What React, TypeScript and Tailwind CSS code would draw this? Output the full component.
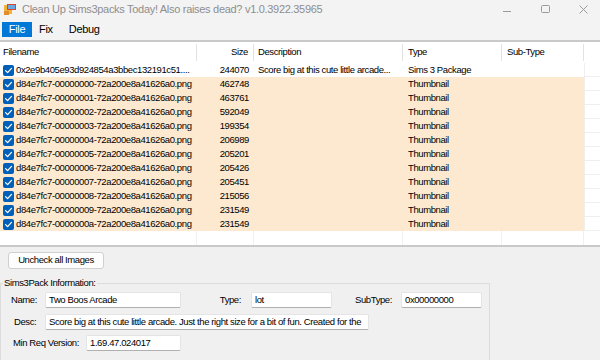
import React from 'react'

const files = [
  { name: '0x2e9b405e93d924854a3bbec132191c51....', size: '244070', desc: 'Score big at this cute little arcade...', type: 'Sims 3 Package', thumb: false },
  { name: 'd84e7fc7-00000000-72a200e8a41626a0.png', size: '462748', desc: '', type: 'Thumbnail', thumb: true },
  { name: 'd84e7fc7-00000001-72a200e8a41626a0.png', size: '463761', desc: '', type: 'Thumbnail', thumb: true },
  { name: 'd84e7fc7-00000002-72a200e8a41626a0.png', size: '592049', desc: '', type: 'Thumbnail', thumb: true },
  { name: 'd84e7fc7-00000003-72a200e8a41626a0.png', size: '199354', desc: '', type: 'Thumbnail', thumb: true },
  { name: 'd84e7fc7-00000004-72a200e8a41626a0.png', size: '206989', desc: '', type: 'Thumbnail', thumb: true },
  { name: 'd84e7fc7-00000005-72a200e8a41626a0.png', size: '205201', desc: '', type: 'Thumbnail', thumb: true },
  { name: 'd84e7fc7-00000006-72a200e8a41626a0.png', size: '205426', desc: '', type: 'Thumbnail', thumb: true },
  { name: 'd84e7fc7-00000007-72a200e8a41626a0.png', size: '205451', desc: '', type: 'Thumbnail', thumb: true },
  { name: 'd84e7fc7-00000008-72a200e8a41626a0.png', size: '215056', desc: '', type: 'Thumbnail', thumb: true },
  { name: 'd84e7fc7-00000009-72a200e8a41626a0.png', size: '231549', desc: '', type: 'Thumbnail', thumb: true },
  { name: 'd84e7fc7-0000000a-72a200e8a41626a0.png', size: '231549', desc: '', type: 'Thumbnail', thumb: true },
]

const cols = 'grid grid-cols-[197px_57px_149px_99px_82px_16px]'

function Check() {
  return (
    <svg width="11" height="11" viewBox="0 0 11 11" className="shrink-0">
      <rect x="0" y="0" width="11" height="11" rx="2" fill="#005fb8" />
      <path d="M2.6 5.6 L4.6 7.6 L8.5 3.4" fill="none" stroke="#fff" strokeWidth="1.3" strokeLinecap="round" strokeLinejoin="round" />
    </svg>
  )
}

function AppIcon() {
  return (
    <svg width="12" height="11" viewBox="0 0 12 11">
      <rect x="0" y="1" width="8" height="9" fill="#f2b33d" />
      <rect x="3" y="0" width="9" height="6" fill="#d9442e" />
      <rect x="4" y="1" width="7" height="4" fill="#6fa6e0" />
      <rect x="0" y="7" width="5" height="4" fill="#e58c2a" />
    </svg>
  )
}

function Field({ w, children }: { w: string; children?: React.ReactNode }) {
  return (
    <div className={`${w} h-[16px] bg-white border border-[#e4e4e4] border-b-[#b0b0b0] rounded-[2px] pl-[3px] flex items-center overflow-hidden whitespace-nowrap`}>
      {children}
    </div>
  )
}

export default function App() {
  return (
    <div className="w-[600px] h-[360px] overflow-hidden bg-[#f0f0f0] font-['Liberation_Sans',Arial,sans-serif] text-[9.5px] tracking-[-0.4px] text-black">
      {/* title bar */}
      <div className="h-[19px] flex items-center bg-[#f3f3f3]">
        <div className="ml-[4px]"><AppIcon /></div>
        <span className="ml-[6px] text-[11px] text-[#8e8e8e] tracking-[-0.3px]">
          Clean Up Sims3packs Today! Also raises dead? v1.0.3922.35965
        </span>
        <div className="ml-auto flex items-center text-[#9a9a9a]">
          <svg width="9" height="9" viewBox="0 0 9 9" className="mr-[29px]"><path d="M0 6.5 H8" stroke="currentColor" strokeWidth="1" /></svg>
          <svg width="9" height="9" viewBox="0 0 9 9" className="mr-[29px]"><rect x="0.5" y="0.5" width="8" height="7" rx="1" fill="none" stroke="currentColor" strokeWidth="1" /></svg>
          <svg width="9" height="9" viewBox="0 0 9 9" className="mr-[12px]"><path d="M0.5 0.5 L8.5 8.5 M8.5 0.5 L0.5 8.5" stroke="currentColor" strokeWidth="1" /></svg>
        </div>
      </div>

      {/* menu */}
      <div className="h-[21px] flex items-center bg-[#f3f3f3] text-[11px] tracking-[-0.3px]">
        <div className="ml-[2px] w-[30px] h-[15px] bg-[#0078d7] text-white flex items-center justify-center">File</div>
        <span className="ml-[7px]">Fix</span>
        <span className="ml-[16px]">Debug</span>
      </div>

      {/* list */}
      <div className="bg-white border-t-2 border-t-[#c9c9c9] border-b-2 border-b-[#c9c9c9] h-[207px] overflow-hidden">
        <div className={`${cols} h-[21px] items-center`}>
          <div className="pl-[3px] border-r border-[#e2e2e2] h-[17px] flex items-center">Filename</div>
          <div className="pr-[5px] border-r border-[#e2e2e2] h-[17px] flex items-center justify-end">Size</div>
          <div className="pl-[4px] border-r border-[#e2e2e2] h-[17px] flex items-center">Description</div>
          <div className="pl-[5px] border-r border-[#e2e2e2] h-[17px] flex items-center">Type</div>
          <div className="pl-[5px] border-r border-[#e2e2e2] h-[17px] flex items-center">Sub-Type</div>
          <div />
        </div>
        {files.map((f) => (
          <div key={f.name} className={`${cols} h-[14px] leading-[14px]`}>
            <div className={`${f.thumb ? 'bg-[#fde9cf]' : ''} pl-[3px] flex items-center gap-[2px] whitespace-nowrap overflow-hidden`}>
              <Check />
              <span>{f.name}</span>
            </div>
            <div className={`${f.thumb ? 'bg-[#fde9cf]' : ''} pr-[5px] text-right`}>{f.size}</div>
            <div className={`${f.thumb ? 'bg-[#fde9cf]' : ''} pl-[4px] whitespace-nowrap overflow-hidden`}>{f.desc}</div>
            <div className={`${f.thumb ? 'bg-[#fde9cf]' : ''} pl-[5px]`}>{f.type}</div>
            <div className={`${f.thumb ? 'bg-[#fde9cf]' : ''}`} />
            <div className="border-b border-l border-[#efefef]" />
          </div>
        ))}
        <div className={`${cols} h-[16px]`}>
          <div className="border-r border-[#f0f0f0]" />
          <div className="border-r border-[#f0f0f0]" />
          <div className="border-r border-[#f0f0f0]" />
          <div className="border-r border-[#f0f0f0]" />
          <div className="border-r border-[#f0f0f0]" />
          <div />
        </div>
      </div>

      {/* bottom */}
      <div className="pl-[8px] pt-[5px]">
        <button className="w-[96px] h-[17px] bg-[#fdfdfd] border border-[#d0d0d0] rounded-[3px] flex items-center justify-center">
          Uncheck all Images
        </button>
      </div>

      <fieldset className="mt-[7px] w-[490px] border border-[#dcdcdc] pl-[2px] pb-[10px]">
        <legend className="px-[1px]">Sims3Pack Information:</legend>

        <div className="flex items-center mt-[2px]">
          <span className="w-[42px] pl-[8px]">Name:</span>
          <Field w="w-[136px]">Two Boos Arcade</Field>
          <span className="w-[70px] pr-[10px] text-right">Type:</span>
          <Field w="w-[81px]">lot</Field>
          <span className="w-[69px] pr-[9px] text-right">SubType:</span>
          <Field w="w-[81px]">0x00000000</Field>
        </div>

        <div className="flex items-center mt-[6px]">
          <span className="w-[42px] pl-[11px]">Desc:</span>
          <Field w="w-[324px]">Score big at this cute little arcade. Just the right size for a bit of fun. Created for the</Field>
        </div>

        <div className="flex items-center mt-[5px]">
          <span className="w-[83px] pl-[10px]">Min Req Version:</span>
          <Field w="w-[95px]">1.69.47.024017</Field>
        </div>
      </fieldset>
    </div>
  )
}
